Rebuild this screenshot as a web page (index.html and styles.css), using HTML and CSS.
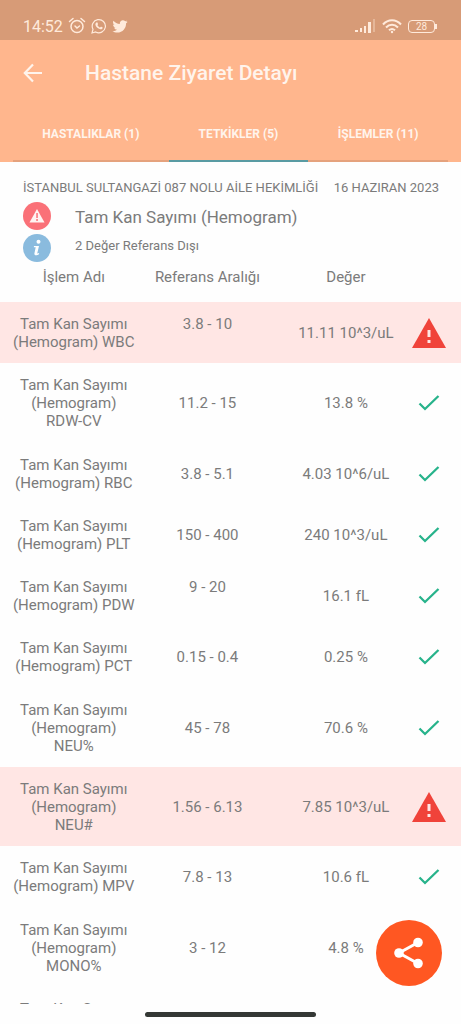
FILE: index.html
```html
<!DOCTYPE html>
<html lang="tr">
<head>
<meta charset="utf-8">
<meta name="viewport" content="width=device-width, initial-scale=1">
<title>Hastane Ziyaret Detayı</title>
<link rel="stylesheet" href="styles.css">
</head>
<body>
<svg class="sprite" aria-hidden="true">
  <symbol id="check" viewBox="0 0 22 18"><path d="M1.500 9.500 7 15 20.500 2" fill="none" stroke="#27b38b" stroke-width="2.300"/></symbol>
  <symbol id="warning" viewBox="0 0 34 30"><path d="M17 0 34 30H0z" fill="#f0433a"/><path d="M15.500 12h3v7h-3zM15.500 22h3v3h-3z" fill="#ffe6e4"/></symbol>
</svg>
<div class="status">
  <div class="status-left">
    <span class="time">14:52</span>
    <svg width="18" height="18" viewBox="0 0 18 18" fill="none" stroke="currentColor" stroke-width="1.500" stroke-linecap="round"><circle cx="9" cy="9.500" r="6"/><path d="M1.500 4.500 5 1.500M16.500 4.500 13 1.500M7 9l2 2 2.500-2"/></svg>
    <svg width="16" height="16" viewBox="0 0 16 16"><path d="M1 15l1-3.700A6.600 6.600 0 1 1 4.700 14z" fill="none" stroke="currentColor" stroke-width="1.200"/><path d="M5.500 4.500c.7-.4 1 .1 1.500 1.500.1.400-.6.900-.5 1.200.6 1.100 1.300 1.800 2.500 2.300.4.100.8-.8 1.200-.7 1.300.6 1.600.7 1.500 1.100-.2 1-1.400 1.500-2.300 1.300-2.700-.5-4.600-2.500-5-4.500-.1-.8.300-1.700 1.100-2.200z" fill="currentColor"/></svg>
    <svg width="16" height="16" viewBox="1 2 22 20" fill="currentColor"><path d="M22.460 6c-.77.350-1.600.58-2.460.69.880-.53 1.560-1.370 1.880-2.380-.83.500-1.750.85-2.720 1.050C18.370 4.500 17.260 4 16 4c-2.350 0-4.270 1.920-4.270 4.290 0 .34.040.67.110.98C8.280 9.090 5.110 7.380 3 4.790c-.37.630-.58 1.370-.58 2.150 0 1.490.75 2.810 1.910 3.560-.71 0-1.370-.2-1.950-.5v.03c0 2.080 1.480 3.820 3.440 4.210a4.220 4.220 0 0 1-1.930.07 4.280 4.280 0 0 0 4 2.980 8.521 8.521 0 0 1-5.330 1.840c-.34 0-.68-.02-1.020-.06C3.440 20.290 5.700 21 8.120 21 16 21 20.330 14.460 20.330 8.790c0-.19 0-.37-.01-.56.840-.6 1.560-1.360 2.140-2.230z"/></svg>
  </div>
  <div class="status-right">
    <svg width="21" height="14" viewBox="0 0 21 14" fill="currentColor"><path d="M0 11h3v2H0zM5 9h2v4H5zM9 7h2v7H9zM13 3h3v11h-3z"/><path d="M18 0h2v13h-2z" opacity=".35"/></svg>
    <svg width="20" height="15" viewBox="0 0 20 15" fill="none" stroke="currentColor" stroke-width="2"><path d="M1 5.500C6-.2 14-.2 19 5.500M4 8.500c3.500-3.600 8.500-3.600 12 0M7 11.300c2-1.800 4-1.800 6 0"/><circle cx="10" cy="13" r="1.200" fill="currentColor" stroke="none"/></svg>
    <span class="battery">28</span>
  </div>
</div>
<header>
  <div class="title-row">
    <button class="back" aria-label="Geri"><svg width="20" height="20" viewBox="0 0 20 20" fill="none" stroke="currentColor" stroke-width="2.200"><path d="M19 10H2M10 1.500 1.800 10l8.200 8.500"/></svg></button>
    <h1>Hastane Ziyaret Detayı</h1>
  </div>
  <nav class="tabs">
    <button class="tab tab-first">HASTALIKLAR (1)</button>
    <button class="tab active">TETKİKLER (5)</button>
    <button class="tab">İŞLEMLER (11)</button>
  </nav>
</header>
<main>
  <section class="summary">
    <div class="place"><span>İSTANBUL SULTANGAZİ 087 NOLU AİLE HEKİMLİĞİ</span><span>16 HAZIRAN 2023</span></div>
    <div class="line">
      <svg width="28" height="28" viewBox="0 0 28 28"><circle cx="14" cy="14" r="14" fill="#fa7178"/><path d="M14 7 21.500 20.500h-15z" fill="#fff4f2"/><path d="M13.300 11h1.500v5h-1.500zM13.300 17h1.500v2h-1.500z" fill="#fa7178"/></svg>
      <h2>Tam Kan Sayımı (Hemogram)</h2>
    </div>
    <div class="line second">
      <svg width="28" height="28" viewBox="0 0 28 28"><circle cx="14" cy="14" r="14" fill="#8abbde"/><circle cx="15.500" cy="7.800" r="2" fill="#fff"/><path d="M11 12h5l-1.800 7.500 2-.6-.3 1.300c-1.600 1.200-5 1.700-4.500-.7l1.300-6.300H10.800z" fill="#fff"/></svg>
      <p>2 Değer Referans Dışı</p>
    </div>
  </section>
  <table>
    <colgroup><col class="c-name"><col class="c-ref"><col class="c-value"><col></colgroup>
    <thead><tr><th>İşlem Adı</th><th>Referans Aralığı</th><th class="value">Değer</th><td></td></tr></thead>
    <tbody>
      <tr class="alert"><td>Tam Kan Sayımı<br>(Hemogram) WBC</td><td class="top">3.8 - 10</td><td class="value">11.11 10^3/uL</td><td><svg class="warn"><use href="#warning"/></svg></td></tr>
      <tr><td>Tam Kan Sayımı<br>(Hemogram)<br>RDW-CV</td><td>11.2 - 15</td><td class="value">13.8 %</td><td><svg class="ok"><use href="#check"/></svg></td></tr>
      <tr><td>Tam Kan Sayımı<br>(Hemogram) RBC</td><td>3.8 - 5.1</td><td class="value">4.03 10^6/uL</td><td><svg class="ok"><use href="#check"/></svg></td></tr>
      <tr><td>Tam Kan Sayımı<br>(Hemogram) PLT</td><td>150 - 400</td><td class="value">240 10^3/uL</td><td><svg class="ok"><use href="#check"/></svg></td></tr>
      <tr><td>Tam Kan Sayımı<br>(Hemogram) PDW</td><td class="top">9 - 20</td><td class="value">16.1 fL</td><td><svg class="ok"><use href="#check"/></svg></td></tr>
      <tr><td>Tam Kan Sayımı<br>(Hemogram) PCT</td><td>0.15 - 0.4</td><td class="value">0.25 %</td><td><svg class="ok"><use href="#check"/></svg></td></tr>
      <tr><td>Tam Kan Sayımı<br>(Hemogram)<br>NEU%</td><td>45 - 78</td><td class="value">70.6 %</td><td><svg class="ok"><use href="#check"/></svg></td></tr>
      <tr class="alert"><td>Tam Kan Sayımı<br>(Hemogram)<br>NEU#</td><td>1.56 - 6.13</td><td class="value">7.85 10^3/uL</td><td><svg class="warn"><use href="#warning"/></svg></td></tr>
      <tr><td>Tam Kan Sayımı<br>(Hemogram) MPV</td><td>7.8 - 13</td><td class="value">10.6 fL</td><td><svg class="ok"><use href="#check"/></svg></td></tr>
      <tr><td>Tam Kan Sayımı<br>(Hemogram)<br>MONO%</td><td>3 - 12</td><td class="value">4.8 %</td><td></td></tr>
      <tr><td class="top">Tam Kan Sayımı</td><td></td><td></td><td></td></tr>
    </tbody>
  </table>
</main>
<footer><div class="home"></div></footer>
<button class="share" aria-label="Paylaş"><svg width="30" height="32" viewBox="0 0 30 32" fill="currentColor"><path d="M24 5.500 5 16l19 10.500" fill="none" stroke="currentColor" stroke-width="3"/><circle cx="24" cy="5.500" r="4.800"/><circle cx="5" cy="16" r="4.800"/><circle cx="24" cy="26.500" r="4.800"/></svg></button>
</body>
</html>
```
FILE: styles.css
```css
* { box-sizing: border-box; }
body {
  margin: 0;
  height: 100vh;
  display: flex;
  flex-direction: column;
  background: #fefefe;
  color: #7b7b7b;
  font-family: Roboto, "Noto Sans", sans-serif;
  overflow: hidden;
}
button { border: 0; padding: 0; background: none; color: inherit; font: inherit; }
svg { display: block; flex: none; }
.sprite { position: absolute; width: 0; height: 0; }

.status {
  flex: none;
  height: 40px;
  padding: 12px 26px 0 23px;
  display: flex;
  justify-content: space-between;
  background: #d79b77;
  color: #ffeadb;
}
.status-left, .status-right { display: flex; align-items: center; height: 28px; }
.status-left { gap: 5px; }
.status-right { gap: 6px; }
.time { font-size: 16px; }
.battery {
  position: relative;
  width: 27px;
  height: 13px;
  border: 1px solid;
  border-radius: 4px;
  font-size: 10px;
  line-height: 11px;
  text-align: center;
}
.battery::after {
  content: "";
  position: absolute;
  right: -3px;
  top: 3px;
  width: 2px;
  height: 5px;
  background: currentColor;
}

header { flex: none; background: #ffb68d; color: #fff4ec; }
.title-row { display: flex; align-items: center; gap: 42px; height: 66px; padding-left: 23px; }
h1 { margin: 0; font-size: 21px; font-weight: 500; }
.tabs { display: flex; height: 56px; padding: 0 13px; }
.tab {
  flex: 140;
  padding-top: 2px;
  border-bottom: 2px solid #e5a27d;
  font-size: 12px;
  font-weight: 700;
}
.tab-first { flex: 156; }
.tab.active { border-color: #599ba3; }

main { flex: 1; min-height: 0; overflow: hidden; }
.summary { padding: 16px 22px 0 23px; }
.place { display: flex; justify-content: space-between; font-size: 13px; line-height: 20px; white-space: nowrap; }
.line { display: flex; align-items: center; gap: 24px; height: 36px; }
.second { height: 30px; align-items: flex-start; }
h2 { margin: 0; font-size: 17px; line-height: 24px; font-weight: 400; padding-top: 2px; }
p { margin: 0; font-size: 13px; line-height: 24px; }

table { width: 100%; height: 766px; border-collapse: collapse; table-layout: fixed; font-size: 15px; line-height: 18px; text-align: center; }
.c-name { width: 32%; }
.c-ref { width: 26%; }
.c-value { width: 28%; }
th { height: 38px; padding: 0 0 12px; font-weight: 400; }
td { padding: 13px 0 12px; }
thead td { padding: 0; }
.top { vertical-align: top; }
th.value, td.value { padding-left: 28px; }
.alert { background: #ffe6e4; }
td svg { margin: 0 auto; }
.warn { width: 34px; height: 30px; }
.ok { width: 22px; height: 18px; }

footer { flex: none; height: 20px; padding-top: 8px; }
.home { width: 37%; height: 5px; margin: 0 auto; border-radius: 3px; background: #343835; }
.share {
  position: fixed;
  right: 19px;
  bottom: 38px;
  width: 66px;
  height: 66px;
  display: grid;
  place-items: center;
  border-radius: 50%;
  background: #ff5722;
  color: #fff;
}
```
